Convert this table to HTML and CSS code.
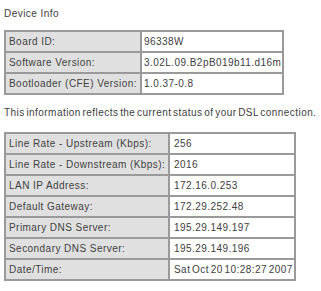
FILE: index.html
```html
<!DOCTYPE html>
<html lang="en">
<head>
    <meta charset="UTF-8">
    <title>Device Info</title>
    <link rel="stylesheet" href="styles.css">
</head>
<body>
<div class="page">
    <div class="title">Device Info</div>
    <table class="info info-device">
        <tr><td class="label">Board ID:</td><td class="value">96338W</td></tr>
        <tr><td class="label">Software Version:</td><td class="value">3.02L.09.B2pB019b11.d16m</td></tr>
        <tr><td class="label">Bootloader (CFE) Version:</td><td class="value">1.0.37-0.8</td></tr>
    </table>
    <p class="note">This information reflects the current status of your DSL connection.</p>
    <table class="info info-dsl">
        <tr><td class="label">Line Rate - Upstream (Kbps):</td><td class="value">256</td></tr>
        <tr><td class="label">Line Rate - Downstream (Kbps):</td><td class="value">2016</td></tr>
        <tr><td class="label">LAN IP Address:</td><td class="value">172.16.0.253</td></tr>
        <tr><td class="label">Default Gateway:</td><td class="value">172.29.252.48</td></tr>
        <tr><td class="label">Primary DNS Server:</td><td class="value">195.29.149.197</td></tr>
        <tr><td class="label">Secondary DNS Server:</td><td class="value">195.29.149.196</td></tr>
        <tr><td class="label">Date/Time:</td><td class="value">Sat Oct 20 10:28:27 2007</td></tr>
    </table>
</div>
</body>
</html>
```

FILE: styles.css
```css
body, html {
    margin: 0;
    padding: 0;
    background-color: #ffffff;
    font-family: "Liberation Sans", Arial, sans-serif;
    font-size: 10px;
    letter-spacing: 0.45px;
    color: #404040;
}
.page {
    padding: 8px 4px;
}
.title {
    line-height: 12px;
    margin-bottom: 10px;
}
.info {
    border-collapse: separate;
    border-spacing: 0;
    border: 1px solid #9a9a9a;
    table-layout: fixed;
}
.info td {
    border: 1px solid #9a9a9a;
    padding: 3px;
    height: 13px;
    line-height: 13px;
    white-space: nowrap;
    overflow: hidden;
}
.info .label {
    background-color: #e0e0e0;
}
.info .value {
    background-color: #ffffff;
    padding-left: 2px;
    padding-right: 0;
    word-spacing: -1.5px;
}
.info-device {
    width: 280px;
}
.info-device .label {
    width: 128px;
}
.info-dsl {
    width: 292px;
}
.info-dsl .label {
    width: 156px;
}
.info-dsl .value {
    padding-left: 4px;
}
.note {
    margin: 12px 0 13px;
    line-height: 12px;
    word-spacing: -1.5px;
    white-space: nowrap;
}
```
